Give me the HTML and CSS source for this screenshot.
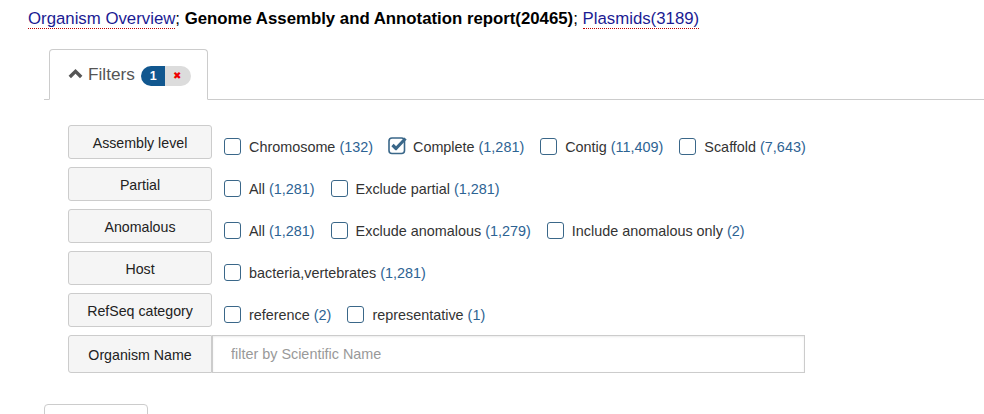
FILE: index.html
```html
<!DOCTYPE html>
<html>
<head>
<meta charset="utf-8">
<link rel="stylesheet" href="styles.css">
</head>
<body>
<div class="crumbs"><a class="lnk" href="#">Organism Overview</a>; <b>Genome Assembly and Annotation report(20465)</b>; <a class="lnk" href="#">Plasmids(3189)</a></div>
<div class="tabs">
  <div class="tab">
    <svg class="chev" width="15" height="11" viewBox="0 0 15 11"><path d="M1.8 9 L7.5 3.3 L13.2 9" fill="none" stroke="#555" stroke-width="3.4"/></svg>
    <span class="tab-label">Filters</span>
    <span class="badge"><span class="badge-n">1</span><span class="badge-x">&#x2716;</span></span>
  </div>
</div>
<div class="filters">
  <div class="row">
    <div class="lbl">Assembly level</div>
    <div class="opts">
      <span class="opt"><span class="cb"></span>Chromosome <span class="cnt">(132)</span></span>
      <span class="opt"><svg class="cbx" width="22" height="20" viewBox="0 0 22 20"><rect x="1" y="3" width="15.5" height="15.5" rx="3" fill="none" stroke="#3a6789" stroke-width="1.6"/><path d="M4.5 10 L8 13.5 L17.5 3.5" fill="none" stroke="#3a6789" stroke-width="3.2" stroke-linejoin="round"/></svg>Complete <span class="cnt">(1,281)</span></span>
      <span class="opt"><span class="cb"></span>Contig <span class="cnt">(11,409)</span></span>
      <span class="opt"><span class="cb"></span>Scaffold <span class="cnt">(7,643)</span></span>
    </div>
  </div>
  <div class="row">
    <div class="lbl">Partial</div>
    <div class="opts">
      <span class="opt"><span class="cb"></span>All <span class="cnt">(1,281)</span></span>
      <span class="opt"><span class="cb"></span>Exclude partial <span class="cnt">(1,281)</span></span>
    </div>
  </div>
  <div class="row">
    <div class="lbl">Anomalous</div>
    <div class="opts">
      <span class="opt"><span class="cb"></span>All <span class="cnt">(1,281)</span></span>
      <span class="opt"><span class="cb"></span>Exclude anomalous <span class="cnt">(1,279)</span></span>
      <span class="opt"><span class="cb"></span>Include anomalous only <span class="cnt">(2)</span></span>
    </div>
  </div>
  <div class="row">
    <div class="lbl">Host</div>
    <div class="opts">
      <span class="opt"><span class="cb"></span>bacteria,vertebrates <span class="cnt">(1,281)</span></span>
    </div>
  </div>
  <div class="row">
    <div class="lbl">RefSeq category</div>
    <div class="opts">
      <span class="opt"><span class="cb"></span>reference <span class="cnt">(2)</span></span>
      <span class="opt"><span class="cb"></span>representative <span class="cnt">(1)</span></span>
    </div>
  </div>
  <div class="row row-input">
    <div class="lbl lbl-in">Organism Name</div>
    <input class="search" type="text" placeholder="filter by Scientific Name">
  </div>
</div>
<div class="bottom-box"></div>
</body>
</html>
```
FILE: styles.css
```css
html, body { margin: 0; padding: 0; background: #fff; }
body { font-family: "Liberation Sans", Arial, sans-serif; color: #222; width: 984px; height: 414px; overflow: hidden; }
.crumbs { padding: 8px 0 0 28px; font-size: 16.8px; line-height: 21px; color: #000; }
.lnk { color: #1b1b93; text-decoration: none; border-bottom: 1px dotted #b00; }
.tabs { margin: 18px 0 0 44px; border-bottom: 1px solid #ccc; height: 52px; display: flex; align-items: flex-end; }
.tab { margin-left: 5px; width: 159px; height: 51px; border: 1px solid #ccc; border-bottom: 1px solid #fff; margin-bottom: -1px; border-radius: 4px 4px 0 0; display: flex; align-items: center; padding-left: 18px; box-sizing: border-box; background: #fff; }
.chev { margin-right: 5px; margin-top: -3px; }
.tab-label { font-size: 17.2px; color: #555; }
.badge { display: inline-flex; height: 20px; margin-left: 6px; border-radius: 10px; overflow: hidden; font-size: 12.5px; line-height: 20px; margin-top: 3px; }
.badge-n { background: #11578f; color: #fff; font-weight: bold; padding: 0 8px 0 9px; }
.badge-x { background: #dcdcdc; color: #e00; padding: 0 10px 0 8px; font-size: 10px; }
.filters { padding: 25px 0 0 68px; display: flex; flex-direction: column; gap: 8px; }
.row { display: flex; align-items: center; }
.lbl { width: 144px; height: 34px; box-sizing: border-box; border: 1px solid #ccc; border-radius: 3px; background: #f5f5f5; font-size: 14.2px; color: #222; display: flex; align-items: center; justify-content: center; padding-top: 1px; }
.opts { display: flex; align-items: center; margin-left: 12px; margin-top: 9px; font-size: 14.4px; color: #333; }
.opt { display: inline-flex; align-items: center; margin-right: 16px; white-space: pre; }
.cb { width: 17px; height: 17px; box-sizing: border-box; border: 1.6px solid #3a6789; border-radius: 3px; margin-right: 8px; }
.cbx { margin-right: 3px; margin-top: -3px; margin-left: -1px; }
.cnt { color: #2d6393; }
.row-input { align-items: stretch; }
.lbl-in { height: 38px; border-radius: 3px 0 0 3px; }
.search { width: 593px; height: 38px; box-sizing: border-box; border: 1.5px solid #ccc; border-left: 1px solid #ccc; border-radius: 0; box-shadow: inset 0 1px 2px rgba(0,0,0,0.08); padding: 0 0 0 18px; font-family: "Liberation Sans", Arial, sans-serif; font-size: 14.4px; color: #333; outline: none; }
.search::placeholder { color: #999; }
.bottom-box { margin: 31px 0 0 44px; width: 104px; height: 20px; border: 1px solid #ccc; border-radius: 4px 4px 0 0; box-sizing: border-box; }
```
